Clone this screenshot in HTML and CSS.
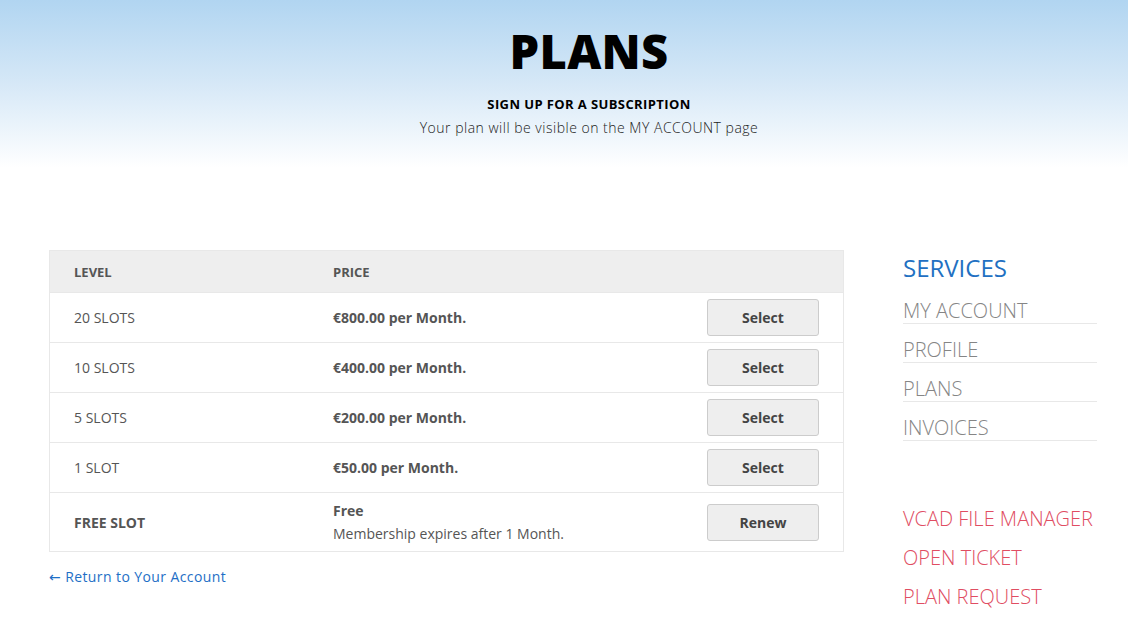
FILE: index.html
```html
<!DOCTYPE html>
<html>
<head>
  <link rel="stylesheet" href="styles.css">
</head>
<body>
  <div class="page-header">
    <h1>PLANS</h1>
    <p class="sub-title">SIGN UP FOR A SUBSCRIPTION</p>
    <p class="sub-text">Your plan will be visible on the MY ACCOUNT page</p>
  </div>

  <div class="content">
    <div class="main">
      <table class="levels">
        <thead>
          <tr>
            <th class="col-level">LEVEL</th>
            <th class="col-price">PRICE</th>
            <th class="col-action"></th>
          </tr>
        </thead>
        <tbody>
          <tr>
            <td>20 SLOTS</td>
            <td><strong>€800.00 per Month.</strong></td>
            <td class="col-action"><button class="btn">Select</button></td>
          </tr>
          <tr>
            <td>10 SLOTS</td>
            <td><strong>€400.00 per Month.</strong></td>
            <td class="col-action"><button class="btn">Select</button></td>
          </tr>
          <tr>
            <td>5 SLOTS</td>
            <td><strong>€200.00 per Month.</strong></td>
            <td class="col-action"><button class="btn">Select</button></td>
          </tr>
          <tr>
            <td>1 SLOT</td>
            <td><strong>€50.00 per Month.</strong></td>
            <td class="col-action"><button class="btn">Select</button></td>
          </tr>
          <tr class="current">
            <td><strong>FREE SLOT</strong></td>
            <td><strong>Free</strong><br>Membership expires after 1 Month.</td>
            <td class="col-action"><button class="btn">Renew</button></td>
          </tr>
        </tbody>
      </table>
      <a class="back-link" href="#">&larr; Return to Your Account</a>
    </div>

    <div class="sidebar">
      <h2>SERVICES</h2>
      <ul class="menu">
        <li><a href="#">MY ACCOUNT</a></li>
        <li><a href="#">PROFILE</a></li>
        <li><a href="#">PLANS</a></li>
        <li><a href="#">INVOICES</a></li>
      </ul>
      <ul class="menu-red">
        <li><a href="#">VCAD FILE MANAGER</a></li>
        <li><a href="#">OPEN TICKET</a></li>
        <li><a href="#">PLAN REQUEST</a></li>
      </ul>
    </div>
  </div>
</body>
</html>
```

FILE: styles.css
```css
/* Base */
body {
  margin: 0;
  font-family: "Open Sans", "DejaVu Sans", sans-serif;
  color: #555;
  background: #fff;
}

a {
  text-decoration: none;
}

/* Header with gradient */
.page-header {
  height: 168px;
  padding-left: 50px;
  text-align: center;
  background: linear-gradient(to bottom, #b1d5f1 0%, #d6e8f7 50%, #ffffff 100%);
  color: #000;
  box-sizing: border-box;
  padding-top: 22px;
}

.page-header h1 {
  margin: 0;
  font-size: 47px;
  font-weight: 800;
  line-height: 58px;
  letter-spacing: 0.3px;
}

.sub-title {
  margin: 14px 0 0;
  font-size: 13px;
  font-weight: 700;
  line-height: 20px;
  letter-spacing: 0.4px;
}

.sub-text {
  margin: 4px 0 0;
  font-size: 14px;
  font-weight: 300;
  line-height: 20px;
  letter-spacing: 0.5px;
  color: #222;
}

/* Content */
.content {
  display: flex;
  padding: 82px 0 0 49px;
}

.main {
  width: 795px;
}

.levels {
  width: 100%;
  border-collapse: collapse;
  border: 1px solid #e8e8e8;
  font-size: 14px;
}

.levels th {
  background: #eeeeee;
  height: 41px;
  text-align: left;
  font-size: 13px;
  font-weight: 700;
  padding: 0 24px;
  color: #555;
}

.levels td {
  height: 49px;
  padding: 0 24px;
  border-top: 1px solid #e8e8e8;
  line-height: 23px;
}

.levels tr.current td {
  height: 58px;
}

.col-level {
  width: 211px;
}

.col-price {
  width: auto;
}

.col-action {
  width: 112px;
  text-align: center;
}

.btn {
  width: 112px;
  height: 37px;
  background: #eeeeee;
  border: 1px solid #cccccc;
  border-radius: 3px;
  font-family: inherit;
  font-size: 14px;
  font-weight: 700;
  color: #444;
}

.back-link {
  display: inline-block;
  margin-top: 15px;
  font-size: 14px;
  letter-spacing: 0.4px;
  color: #1e6fc6;
}

/* Sidebar */
.sidebar {
  margin-left: 59px;
  width: 194px;
  margin-top: 1px;
}

.sidebar h2 {
  margin: 0 0 1px;
  font-size: 24px;
  font-weight: 400;
  line-height: 33px;
  color: #2270c2;
}

.menu,
.menu-red {
  list-style: none;
  margin: 0;
  padding: 0;
}

.menu li {
  border-bottom: 1px solid #e8e8e8;
  line-height: 24px;
  height: 24px;
  padding-top: 14px;
}

.menu li a {
  font-size: 20px;
  font-weight: 300;
  color: #858585;
}

.menu-red {
  margin-top: 58px;
}

.menu-red li {
  line-height: 39px;
  height: 39px;
}

.menu-red li a {
  font-size: 20px;
  font-weight: 300;
  color: #e04d62;
}
```
